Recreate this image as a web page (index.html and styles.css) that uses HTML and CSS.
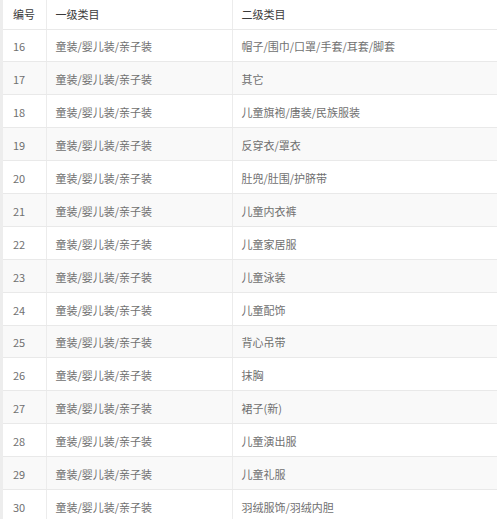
FILE: index.html
```html
<!DOCTYPE html>
<html lang="zh-CN">
<head>
<meta charset="utf-8">
<title>类目</title>
<link rel="stylesheet" href="styles.css">
</head>
<body>
<div class="wrap">
<table class="cat-table">
  <colgroup>
    <col class="c1"><col class="c2"><col class="c3">
  </colgroup>
  <thead>
    <tr><th>编号</th><th>一级类目</th><th>二级类目</th></tr>
  </thead>
  <tbody>
    <tr><td>16</td><td>童装/婴儿装/亲子装</td><td>帽子/围巾/口罩/手套/耳套/脚套</td></tr>
    <tr><td>17</td><td>童装/婴儿装/亲子装</td><td>其它</td></tr>
    <tr><td>18</td><td>童装/婴儿装/亲子装</td><td>儿童旗袍/唐装/民族服装</td></tr>
    <tr><td>19</td><td>童装/婴儿装/亲子装</td><td>反穿衣/罩衣</td></tr>
    <tr><td>20</td><td>童装/婴儿装/亲子装</td><td>肚兜/肚围/护脐带</td></tr>
    <tr><td>21</td><td>童装/婴儿装/亲子装</td><td>儿童内衣裤</td></tr>
    <tr><td>22</td><td>童装/婴儿装/亲子装</td><td>儿童家居服</td></tr>
    <tr><td>23</td><td>童装/婴儿装/亲子装</td><td>儿童泳装</td></tr>
    <tr><td>24</td><td>童装/婴儿装/亲子装</td><td>儿童配饰</td></tr>
    <tr><td>25</td><td>童装/婴儿装/亲子装</td><td>背心吊带</td></tr>
    <tr><td>26</td><td>童装/婴儿装/亲子装</td><td>抹胸</td></tr>
    <tr><td>27</td><td>童装/婴儿装/亲子装</td><td>裙子(新)</td></tr>
    <tr><td>28</td><td>童装/婴儿装/亲子装</td><td>儿童演出服</td></tr>
    <tr><td>29</td><td>童装/婴儿装/亲子装</td><td>儿童礼服</td></tr>
    <tr><td>30</td><td>童装/婴儿装/亲子装</td><td>羽绒服饰/羽绒内胆</td></tr>
  </tbody>
</table>
</div>
</body>
</html>
```

FILE: styles.css
```css
html, body {
  margin: 0;
  padding: 0;
  background: #fff;
}
.wrap {
  border-left: 3px solid #ededed;
  width: 494px;
  height: 519px;
  overflow: hidden;
}
.cat-table {
  border-collapse: collapse;
  table-layout: fixed;
  width: 494px;
  font-family: "Noto Sans CJK SC", "Noto Sans", sans-serif;
  font-size: 11px;
  line-height: 14px;
  color: #707070;
}
.c1 { width: 43px; }
.c2 { width: 186px; }
.c3 { width: 265px; }
.cat-table th,
.cat-table td {
  text-align: left;
  font-weight: normal;
  padding: 0 0 0 9px;
  border-bottom: 1px solid #e9e9e9;
  border-right: 1px solid #ececec;
  white-space: nowrap;
  vertical-align: middle;
}
.cat-table th:first-child,
.cat-table td:first-child {
  padding-left: 10px;
}
.cat-table th:last-child,
.cat-table td:last-child {
  border-right: none;
}
.cat-table thead tr {
  height: 29px;
}
.cat-table th {
  color: #3a3a3a;
}
.cat-table tbody tr {
  height: 32.9px;
}
.cat-table td {
  padding-top: 2px;
}
.cat-table tbody tr:nth-child(even) td {
  background: #f9f9f9;
}
```
